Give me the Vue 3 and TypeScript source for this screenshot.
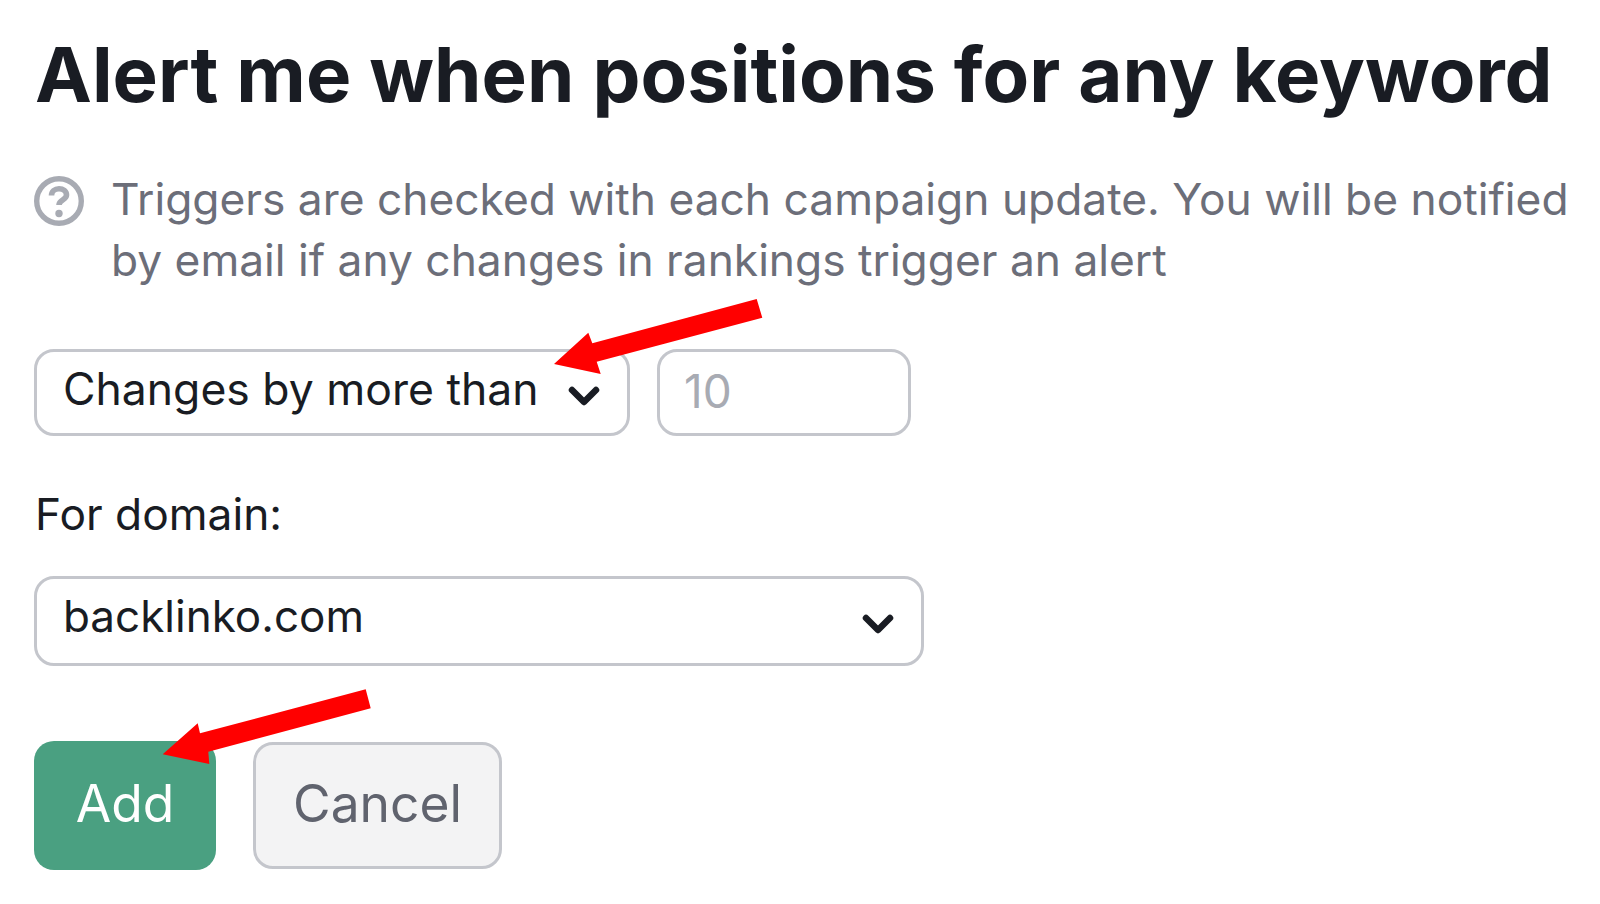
<script setup lang="ts">
const title: string = 'Alert me when positions for any keyword'
</script>

<template>
  <main class="page">
    <h1 class="title">{{ title }}</h1>
    <div class="note">
      <svg class="help" viewBox="0 0 50 50" aria-hidden="true">
        <circle cx="25" cy="25" r="22.300" fill="none" stroke="#a8abb3" stroke-width="5.400" />
        <path d="M17.500 19.500c0-4.200 3.300-6.800 7.500-6.800s7.500 2.600 7.500 6.300c0 5.200-7.500 4.500-7.500 10" fill="none" stroke="#a8abb3" stroke-width="5.600" />
        <circle cx="25" cy="37.500" r="3.700" fill="#a8abb3" />
      </svg>
      <p>Triggers are checked with each campaign update. You will be notified by email if any changes in rankings trigger an alert</p>
    </div>
    <div class="row">
      <div class="field select-one">
        <span class="value">Changes by more than</span>
        <svg class="chev" viewBox="0 0 32 20"><path d="M4 4l12 12L28 4" /></svg>
        <svg class="arrow arrow-one" viewBox="0 0 216 84"><path d="M206.700 4l5.600 18.700L46.700 66.700 50.700 79 4 69l34.300-31.300 4 10.600z" /></svg>
      </div>
      <div class="field number">10</div>
    </div>
    <div class="label">For domain:</div>
    <div class="field domain">
      <span class="value small">backlinko.com</span>
      <svg class="chev" viewBox="0 0 32 20"><path d="M4 4l12 12L28 4" /></svg>
    </div>
    <div class="actions">
      <button class="btn add" type="button">Add
        <svg class="arrow arrow-two" viewBox="0 0 216 84"><path d="M205.700 4.300l5 19L48.300 66.700 49.300 79 2.700 69.300l35-31 2.300 10z" /></svg>
      </button>
      <button class="btn cancel" type="button">Cancel</button>
    </div>
  </main>
</template>

<style scoped>
.page { box-sizing: border-box; width: 1600px; height: 904px; padding: 32px 0 0 34px; background: #fff; font-family: Inter, "Liberation Sans", sans-serif; color: #191c23; overflow: hidden; }
.title { margin: 0 0 0 1px; font-size: 76.2px; line-height: 84px; font-weight: 700; white-space: nowrap; }
.note { display: flex; gap: 27px; margin-top: 53px; }
.help { width: 50px; height: 50px; flex: none; margin-top: 7px; }
.note p { margin: 0; font-size: 44.3px; line-height: 61px; color: #6c6e79; width: 1490px; }
.row { display: flex; gap: 27px; margin-top: 58px; }
.field { box-sizing: border-box; border: 3px solid #c4c6cc; border-radius: 20px; display: flex; align-items: center; justify-content: space-between; font-size: 44.5px; position: relative; background: #fff; }
.select-one { width: 596px; height: 87px; padding: 0 27px; }
.number { width: 254px; height: 87px; padding: 0 24px 4px; color: #a8abb3; font-size: 46px; }
.label { margin: 53px 0 0 1px; font-size: 44.3px; line-height: 50px; }
.domain { width: 890px; height: 90px; margin-top: 37px; padding: 0 27px; }
.value { margin-bottom: 7px; margin-left: -1px; }
.value.small { font-size: 44px; margin-bottom: 10px; }
.chev { width: 32px; height: 20px; margin-top: 6px; fill: none; stroke: #191c23; stroke-width: 6.5; stroke-linecap: round; stroke-linejoin: round; }
.arrow { position: absolute; width: 216px; height: 84px; fill: #ff0000; }
.arrow-one { left: 513px; top: -57px; }
.arrow-two { left: 126px; top: -56px; }
.actions { display: flex; align-items: center; gap: 37px; margin-top: 75px; }
.btn { box-sizing: border-box; font: 400 51.5px Inter, "Liberation Sans", sans-serif; border-radius: 20px; position: relative; padding: 0 0 6px; }
.add { width: 182px; height: 129px; border: 0; background: #4aa081; color: #fff; }
.cancel { width: 249px; height: 127px; border: 3px solid #c4c6cc; background: #f3f3f4; color: #60636e; }
</style>
